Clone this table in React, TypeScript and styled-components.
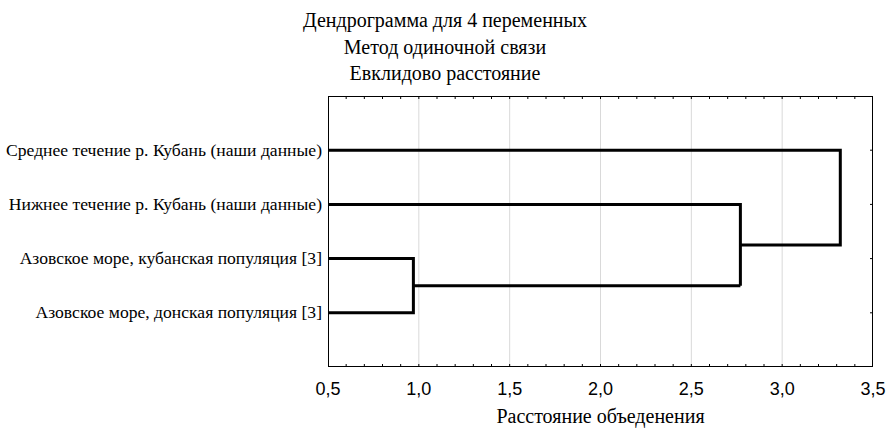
import React from 'react'
import styled, { createGlobalStyle } from 'styled-components'

const GlobalStyle = createGlobalStyle`
  html, body {
    margin: 0;
    padding: 0;
    background: #ffffff;
  }
  body {
    font-family: 'Liberation Serif', 'Times New Roman', serif;
    color: #000000;
  }
`

const PLOT_WIDTH = 545
const PLOT_HEIGHT = 271
const X_MIN = 0.5
const X_MAX = 3.5
const ROW_STEP = PLOT_HEIGHT / 5

const xScale = (v: number) => ((v - X_MIN) / (X_MAX - X_MIN)) * PLOT_WIDTH
const rowY = (i: number) => ROW_STEP * (i + 1)

const LEAVES = [
  'Среднее течение р. Кубань (наши данные)',
  'Нижнее течение р. Кубань (наши данные)',
  'Азовское море, кубанская популяция [3]',
  'Азовское море, донская популяция [3]',
]

const TICKS = [0.5, 1.0, 1.5, 2.0, 2.5, 3.0, 3.5]

const Page = styled.div`
  width: 890px;
  height: 431px;
  overflow: hidden;
`

const Title = styled.div`
  padding-top: 7px;
  text-align: center;
  font-size: 20px;
  line-height: 26.5px;
`

const ChartRow = styled.div`
  display: grid;
  grid-template-columns: 328px ${PLOT_WIDTH}px;
  margin-top: 9.5px;
`

const LeafList = styled.div`
  display: grid;
  grid-template-rows: repeat(4, ${ROW_STEP}px);
  padding-top: ${ROW_STEP / 2}px;
  padding-right: 6px;
  height: ${PLOT_HEIGHT}px;
  box-sizing: border-box;
`

const Leaf = styled.div`
  display: flex;
  align-items: center;
  justify-content: flex-end;
  white-space: nowrap;
  font-size: 17.6px;
`

const Plot = styled.svg`
  display: block;
  overflow: visible;
`

const TickLabel = styled.text`
  font-family: 'Liberation Sans', Arial, sans-serif;
  font-size: 18px;
  fill: #000000;
`

const AxisTitle = styled.div`
  margin-left: 328px;
  width: ${PLOT_WIDTH}px;
  margin-top: 3px;
  text-align: center;
  font-size: 20px;
  line-height: 24px;
`

const Dendrogram = () => {
  const joinA = xScale(0.97)
  const joinB = xScale(2.77)
  const joinC = xScale(3.32)
  const midA = (rowY(2) + rowY(3)) / 2
  const midB = (rowY(1) + midA) / 2

  const minorTicks: number[] = []
  for (let v = 0.6; v < X_MAX; v += 0.1) minorTicks.push(xScale(v))

  return (
    <Plot width={PLOT_WIDTH} height={305}>
      {TICKS.slice(1, -1).map((t) => (
        <line key={t} x1={xScale(t)} x2={xScale(t)} y1={0} y2={PLOT_HEIGHT} stroke="#d9d9d9" strokeWidth={1} />
      ))}
      {minorTicks.map((x) => (
        <g key={x}>
          <line x1={x} x2={x} y1={0} y2={3} stroke="#000" strokeWidth={1} />
          <line x1={x} x2={x} y1={PLOT_HEIGHT - 3} y2={PLOT_HEIGHT} stroke="#000" strokeWidth={1} />
        </g>
      ))}
      {[0, 1, 2, 3].map((i) => (
        <line key={i} x1={PLOT_WIDTH - 3} x2={PLOT_WIDTH} y1={rowY(i)} y2={rowY(i)} stroke="#000" strokeWidth={1} />
      ))}
      <rect x={0.5} y={0.5} width={PLOT_WIDTH - 1} height={PLOT_HEIGHT - 1} fill="none" stroke="#000" strokeWidth={1} />
      <g fill="none" stroke="#000" strokeWidth={3} strokeLinejoin="miter">
        <path d={`M0 ${rowY(2)} H${joinA} V${rowY(3)} H0`} />
        <path d={`M${joinA} ${midA} H${joinB}`} />
        <path d={`M0 ${rowY(1)} H${joinB} V${midA}`} />
        <path d={`M${joinB} ${midB} H${joinC} V${rowY(0)} H0`} />
      </g>
      {TICKS.map((t) => (
        <TickLabel key={t} x={xScale(t)} y={299} textAnchor="middle">
          {t.toFixed(1).replace('.', ',')}
        </TickLabel>
      ))}
    </Plot>
  )
}

export default function App() {
  return (
    <Page>
      <GlobalStyle />
      <Title>
        <div>Дендрограмма для 4 переменных</div>
        <div>Метод одиночной связи</div>
        <div>Евклидово расстояние</div>
      </Title>
      <ChartRow>
        <LeafList>
          {LEAVES.map((name) => (
            <Leaf key={name}>{name}</Leaf>
          ))}
        </LeafList>
        <Dendrogram />
      </ChartRow>
      <AxisTitle>Расстояние объеденения</AxisTitle>
    </Page>
  )
}
